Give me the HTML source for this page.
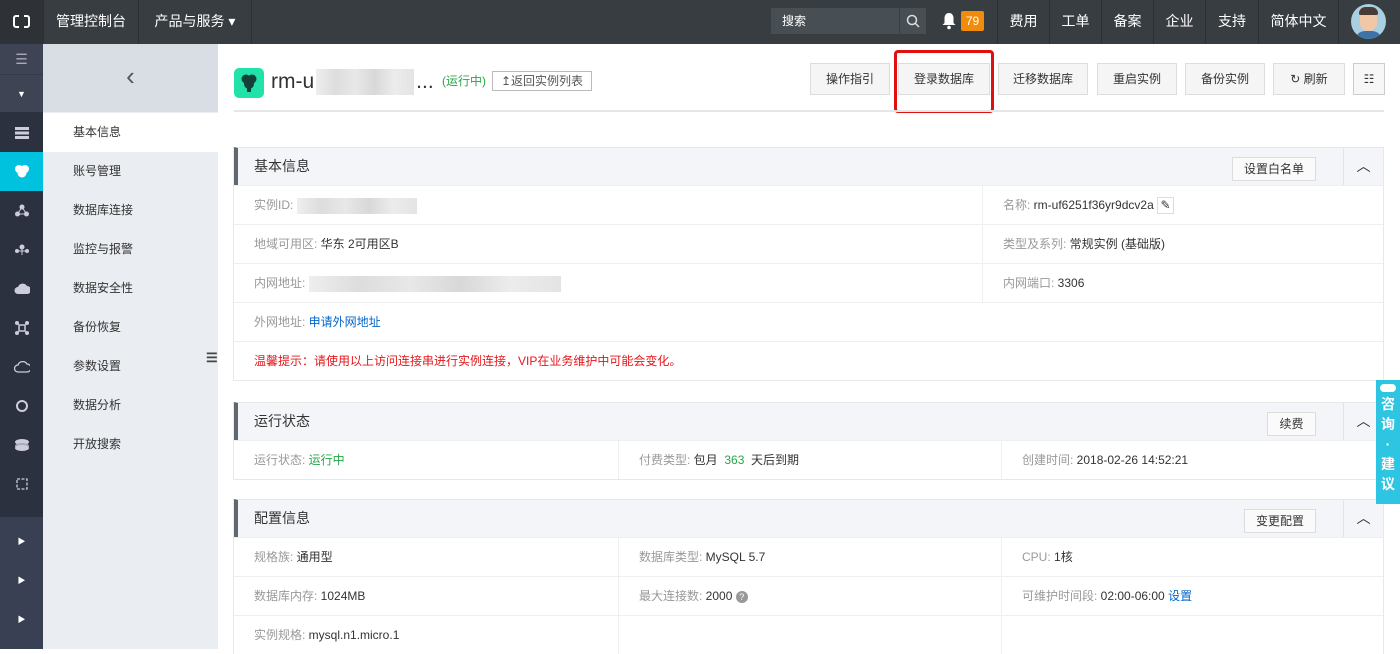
<!DOCTYPE html>
<html><head><meta charset="utf-8"><style>
*{margin:0;padding:0;box-sizing:border-box}
body{width:1400px;height:649px;overflow:hidden;position:relative;background:#fff;font-family:"Liberation Sans","Noto Sans CJK SC",sans-serif;font-size:12px;color:#333}
.a{position:absolute}
.top{left:0;top:0;width:1400px;height:44px;background:#373d41;color:#fff}
.ti{position:absolute;top:0;height:44px;line-height:42px;font-size:14px;color:#fff;text-align:center;border-left:1px solid #2b3034}
.sb{left:0;top:44px;width:43px;height:605px;background:#2c313f}
.ic{position:absolute;left:0;width:43px;height:39px;display:flex;align-items:center;justify-content:center}
.s2{left:43px;top:44px;width:175px;height:605px;background:#eaedf1}
.mi{position:absolute;left:0;width:175px;height:39px;line-height:39px;padding-left:30px;font-size:12px;color:#333}
.btn{position:absolute;top:63px;height:32px;line-height:30px;border:1px solid #ddd;background:#f5f5f5;text-align:center;font-size:12px;color:#333}
.panel{position:absolute;left:233px;width:1151px;border:1px solid #e8e8e8;border-top:none}
.ph{height:38px;background:#f4f5f9;border-left:4px solid #5f6770;border-top:1px solid #e8e8e8;position:relative;line-height:37px;padding-left:16px;font-size:14px;color:#333}
.row{height:39px;border-top:1px solid #efefef;position:relative;line-height:38px}
.c{position:absolute;top:0;height:38px;padding-left:20px;white-space:nowrap}
.l{color:#999}
.pb{position:absolute;top:9px;height:24px;line-height:22px;border:1px solid #ddd;background:#fafafa;font-size:12px;text-align:center;padding:0 12px}
.col{position:absolute;right:0;top:0;width:40px;height:37px;border-left:1px solid #e4e4e4;text-align:center}
.blur{display:inline-block;vertical-align:middle;height:16px;background:linear-gradient(90deg,#eee,#ddd 20%,#e8e8e8 40%,#d8d8d8 60%,#ececec 80%,#e4e4e4)}
</style></head><body>
<div class="a top">
 <div class="a" style="left:0;top:0;width:43px;height:44px;background:#2e3236"></div>
 <div class="a" style="left:13px;top:15px;width:17px;height:13px;border:2.5px solid #fff;border-radius:3px"></div>
 <div class="a" style="left:19px;top:12px;width:5px;height:19px;background:#2e3236"></div>
 <div class="ti" style="left:43px;width:95px">管理控制台</div>
 <div class="ti" style="left:138px;width:113px">产品与服务 ▾</div>
 <div class="ti" style="left:251px;width:0"></div>
 <div class="a" style="left:771px;top:8px;width:155px;height:26px;background:#484f54"></div>
 <div class="a" style="left:782px;top:8px;line-height:26px;font-size:12px;color:#fff">搜索</div>
 <div class="a" style="left:899px;top:8px;width:1px;height:26px;background:#373d41"></div>
 <svg class="a" style="left:906px;top:14px" width="14" height="14"><circle cx="6" cy="6" r="4.5" stroke="#ddd" stroke-width="1.5" fill="none"/><path d="M9.5 9.5l3.5 3.5" stroke="#ddd" stroke-width="1.5"/></svg>
 <svg class="a" style="left:942px;top:12px" width="14" height="18"><path d="M7 1c3 0 4.5 2.5 4.5 5v5l2 2H.5l2-2V6C2.5 3.5 4 1 7 1z" fill="#fff"/><circle cx="7" cy="15.5" r="1.8" fill="#fff"/></svg>
 <div class="a" style="left:961px;top:11px;width:23px;height:20px;background:#f38b0a;border-radius:2px;text-align:center;line-height:20px;font-size:12px;color:#fff">79</div>
 <div class="ti" style="left:997px;width:52px">费用</div>
 <div class="ti" style="left:1049px;width:52px">工单</div>
 <div class="ti" style="left:1101px;width:52px">备案</div>
 <div class="ti" style="left:1153px;width:52px">企业</div>
 <div class="ti" style="left:1205px;width:53px">支持</div>
 <div class="ti" style="left:1258px;width:80px">简体中文</div>
 <div class="ti" style="left:1338px;width:62px"></div>
 <div class="a" style="left:1351px;top:4px;width:35px;height:35px;border-radius:50%;background:#a9cfe0;overflow:hidden">
  <div class="a" style="left:9px;top:5px;width:17px;height:22px;border-radius:8px;background:#f1c7a5"></div>
  <div class="a" style="left:8px;top:3px;width:19px;height:8px;border-radius:8px 8px 2px 2px;background:#4a3b35"></div>
  <div class="a" style="left:4px;top:27px;width:27px;height:12px;border-radius:10px 10px 0 0;background:#3d74a8"></div>
 </div>
</div>

<div class="a sb">
 <div class="a" style="left:0;top:0;width:43px;height:68px;background:#3e4454"></div>
 <div class="a" style="left:0;top:30px;width:43px;height:1px;background:#353a48"></div>
 <div class="ic" style="top:-4px;color:#aab;font-size:14px">☰</div>
 <div class="ic" style="top:30px;color:#fff;font-size:9px">▼</div>
 <div class="ic" style="top:69px"><svg width="14" height="12"><rect y="0" width="14" height="3" fill="#ccd"/><rect y="4.5" width="14" height="3" fill="#ccd"/><rect y="9" width="14" height="3" fill="#ccd"/></svg></div>
 <div class="ic" style="top:108px;background:#00c1de"><svg width="14" height="13"><circle cx="4" cy="4" r="4" fill="#fff"/><circle cx="10" cy="4" r="4" fill="#fff"/><circle cx="7" cy="8" r="4.5" fill="#fff"/></svg></div>
 <div class="ic" style="top:147px"><svg width="14" height="13"><circle cx="7" cy="3" r="2.5" fill="#ccd"/><circle cx="2.5" cy="10" r="2.5" fill="#ccd"/><circle cx="11.5" cy="10" r="2.5" fill="#ccd"/><path d="M7 3L2.5 10h9z" stroke="#ccd" fill="none"/></svg></div>
 <div class="ic" style="top:186px"><svg width="14" height="13"><circle cx="7" cy="4" r="2.5" fill="#ccd"/><circle cx="2" cy="8" r="2" fill="#ccd"/><circle cx="12" cy="8" r="2" fill="#ccd"/><path d="M2 8h10M7 4v8" stroke="#ccd"/></svg></div>
 <div class="ic" style="top:225px"><svg width="16" height="12"><path d="M4 11a3.5 3.5 0 010-7 5 5 0 019-1 4 4 0 010 8z" fill="#ccd"/></svg></div>
 <div class="ic" style="top:264px"><svg width="14" height="14"><circle cx="2" cy="2" r="2" fill="#ccd"/><circle cx="12" cy="2" r="2" fill="#ccd"/><circle cx="2" cy="12" r="2" fill="#ccd"/><circle cx="12" cy="12" r="2" fill="#ccd"/><rect x="4" y="4" width="6" height="6" fill="none" stroke="#ccd" stroke-width="1.5"/></svg></div>
 <div class="ic" style="top:303px"><svg width="16" height="12"><path d="M4 11a3.5 3.5 0 010-7 5 5 0 019-1 4 4 0 010 8z" fill="none" stroke="#ccd" stroke-width="1.3"/></svg></div>
 <div class="ic" style="top:342px"><svg width="14" height="14"><circle cx="7" cy="7" r="5" fill="none" stroke="#ccd" stroke-width="2"/></svg></div>
 <div class="ic" style="top:381px"><svg width="14" height="12"><ellipse cx="7" cy="3" rx="7" ry="3" fill="#ccd"/><ellipse cx="7" cy="7" rx="7" ry="3" fill="#aab"/><ellipse cx="7" cy="9" rx="7" ry="3" fill="#ccd"/></svg></div>
 <div class="ic" style="top:420px"><svg width="14" height="14"><rect x="2" y="2" width="10" height="10" fill="none" stroke="#ccd" stroke-width="1.3" stroke-dasharray="3 1.5"/></svg></div>
 <div class="a" style="left:0;top:473px;width:43px;height:132px;background:#394053"></div>
 <div class="ic" style="top:478px;color:#fff;font-size:8px">▶</div>
 <div class="ic" style="top:517px;color:#fff;font-size:8px">▶</div>
 <div class="ic" style="top:556px;color:#fff;font-size:8px">▶</div>
</div>

<div class="a s2">
 <div class="a" style="left:0;top:0;width:175px;height:68px;background:#d9dee4;text-align:center;line-height:64px;font-size:26px;color:#555">&#x2039;</div>
 <div class="mi" style="top:69px;background:#fff">基本信息</div>
 <div class="mi" style="top:108px">账号管理</div>
 <div class="mi" style="top:147px">数据库连接</div>
 <div class="mi" style="top:186px">监控与报警</div>
 <div class="mi" style="top:225px">数据安全性</div>
 <div class="mi" style="top:264px">备份恢复</div>
 <div class="mi" style="top:303px">参数设置</div>
 <div class="mi" style="top:342px">数据分析</div>
 <div class="mi" style="top:381px">开放搜索</div>
 <div class="a" style="left:163px;top:306px;width:12px;height:24px;color:#444;font-size:13px;font-weight:bold">☰</div>
</div>

<div class="a" style="left:234px;top:68px;width:30px;height:30px;border-radius:5px;background:#21e3a9"></div>
<svg class="a" style="left:241px;top:74px" width="16" height="18"><circle cx="5" cy="5" r="4.5" fill="#14403a"/><circle cx="11" cy="5" r="4.5" fill="#14403a"/><circle cx="8" cy="10" r="5" fill="#14403a"/><rect x="6" y="12" width="4" height="6" fill="#14403a"/></svg>
<div class="a" style="left:271px;top:68px;font-size:21px;color:#333;line-height:28px">rm-u<span class="blur" style="width:98px;height:26px;margin:0 2px"></span>...</div>
<div class="a" style="left:442px;top:72px;font-size:12px;color:#28a745">(运行中)</div>
<div class="a" style="left:492px;top:71px;width:100px;height:20px;border:1px solid #bbb;font-size:12px;line-height:18px;text-align:center;color:#555">↥返回实例列表</div>

<div class="btn" style="left:810px;width:80px">操作指引</div>
<div class="btn" style="left:898px;width:92px">登录数据库</div>
<div class="btn" style="left:998px;width:90px">迁移数据库</div>
<div class="btn" style="left:1097px;width:80px">重启实例</div>
<div class="btn" style="left:1185px;width:80px">备份实例</div>
<div class="btn" style="left:1273px;width:72px">↻ 刷新</div>
<div class="btn" style="left:1353px;width:32px;background:#f7f7f7;border-color:#ccc">☷</div>
<div class="a" style="left:894px;top:50px;width:100px;height:63px;border:3px solid #e01010;border-radius:4px"></div>
<div class="a" style="left:234px;top:110px;width:1150px;height:2px;background:#e6e6e6"></div>

<div class="panel" style="top:147px">
 <div class="ph">基本信息<div class="pb" style="right:67px;width:84px;padding:0">设置白名单</div><div class="col">︿</div></div>
 <div class="row"><div class="c"><span class="l">实例ID: </span><span class="blur" style="width:120px"></span></div><div class="c" style="left:748px;border-left:1px solid #efefef"><span class="l">名称: </span>rm-uf6251f36yr9dcv2a <span style="display:inline-block;width:17px;height:17px;border:1px solid #ddd;vertical-align:middle;text-align:center;line-height:15px">✎</span></div></div>
 <div class="row"><div class="c"><span class="l">地域可用区: </span>华东 2可用区B</div><div class="c" style="left:748px;border-left:1px solid #efefef"><span class="l">类型及系列: </span>常规实例 (基础版)</div></div>
 <div class="row"><div class="c"><span class="l">内网地址: </span><span class="blur" style="width:252px"></span></div><div class="c" style="left:748px;border-left:1px solid #efefef"><span class="l">内网端口: </span>3306</div></div>
 <div class="row"><div class="c"><span class="l">外网地址: </span><span style="color:#0066cc">申请外网地址</span></div></div>
 <div class="row"><div class="c" style="color:#e5161b">温馨提示：请使用以上访问连接串进行实例连接，VIP在业务维护中可能会变化。</div></div>
</div>

<div class="panel" style="top:402px">
 <div class="ph">运行状态<div class="pb" style="right:67px;width:49px;padding:0">续费</div><div class="col">︿</div></div>
 <div class="row"><div class="c"><span class="l">运行状态: </span><span style="color:#28a745">运行中</span></div><div class="c" style="left:384px;border-left:1px solid #efefef"><span class="l">付费类型: </span>包月 <span style="color:#28a745">&nbsp;363&nbsp;</span> 天后到期</div><div class="c" style="left:767px;border-left:1px solid #efefef"><span class="l">创建时间: </span>2018-02-26 14:52:21</div></div>
</div>

<div class="panel" style="top:499px;border-bottom:none">
 <div class="ph">配置信息<div class="pb" style="right:67px;width:72px;padding:0">变更配置</div><div class="col">︿</div></div>
 <div class="row"><div class="c"><span class="l">规格族: </span>通用型</div><div class="c" style="left:384px;border-left:1px solid #efefef"><span class="l">数据库类型: </span>MySQL 5.7</div><div class="c" style="left:767px;border-left:1px solid #efefef"><span class="l">CPU: </span>1核</div></div>
 <div class="row"><div class="c"><span class="l">数据库内存: </span>1024MB</div><div class="c" style="left:384px;border-left:1px solid #efefef"><span class="l">最大连接数: </span>2000 <span style="display:inline-block;width:12px;height:12px;border-radius:50%;background:#999;color:#fff;font-size:9px;line-height:12px;text-align:center;vertical-align:middle">?</span></div><div class="c" style="left:767px;border-left:1px solid #efefef"><span class="l">可维护时间段: </span>02:00-06:00 <span style="color:#0066cc">设置</span></div></div>
 <div class="row"><div class="c"><span class="l">实例规格: </span>mysql.n1.micro.1</div><div class="c" style="left:384px;border-left:1px solid #efefef;width:1px"></div><div class="c" style="left:767px;border-left:1px solid #efefef;width:1px"></div></div>
</div>

<div class="a" style="left:1376px;top:380px;width:24px;height:124px;background:#2ec5e3;color:#fff;font-size:14px;font-weight:bold;text-align:center;line-height:20px;padding-top:4px">
 <div style="width:16px;height:8px;background:#fff;border-radius:4px;margin:0 auto 2px"></div>咨<br>询<br>·<br>建<br>议
</div>
</body></html>
